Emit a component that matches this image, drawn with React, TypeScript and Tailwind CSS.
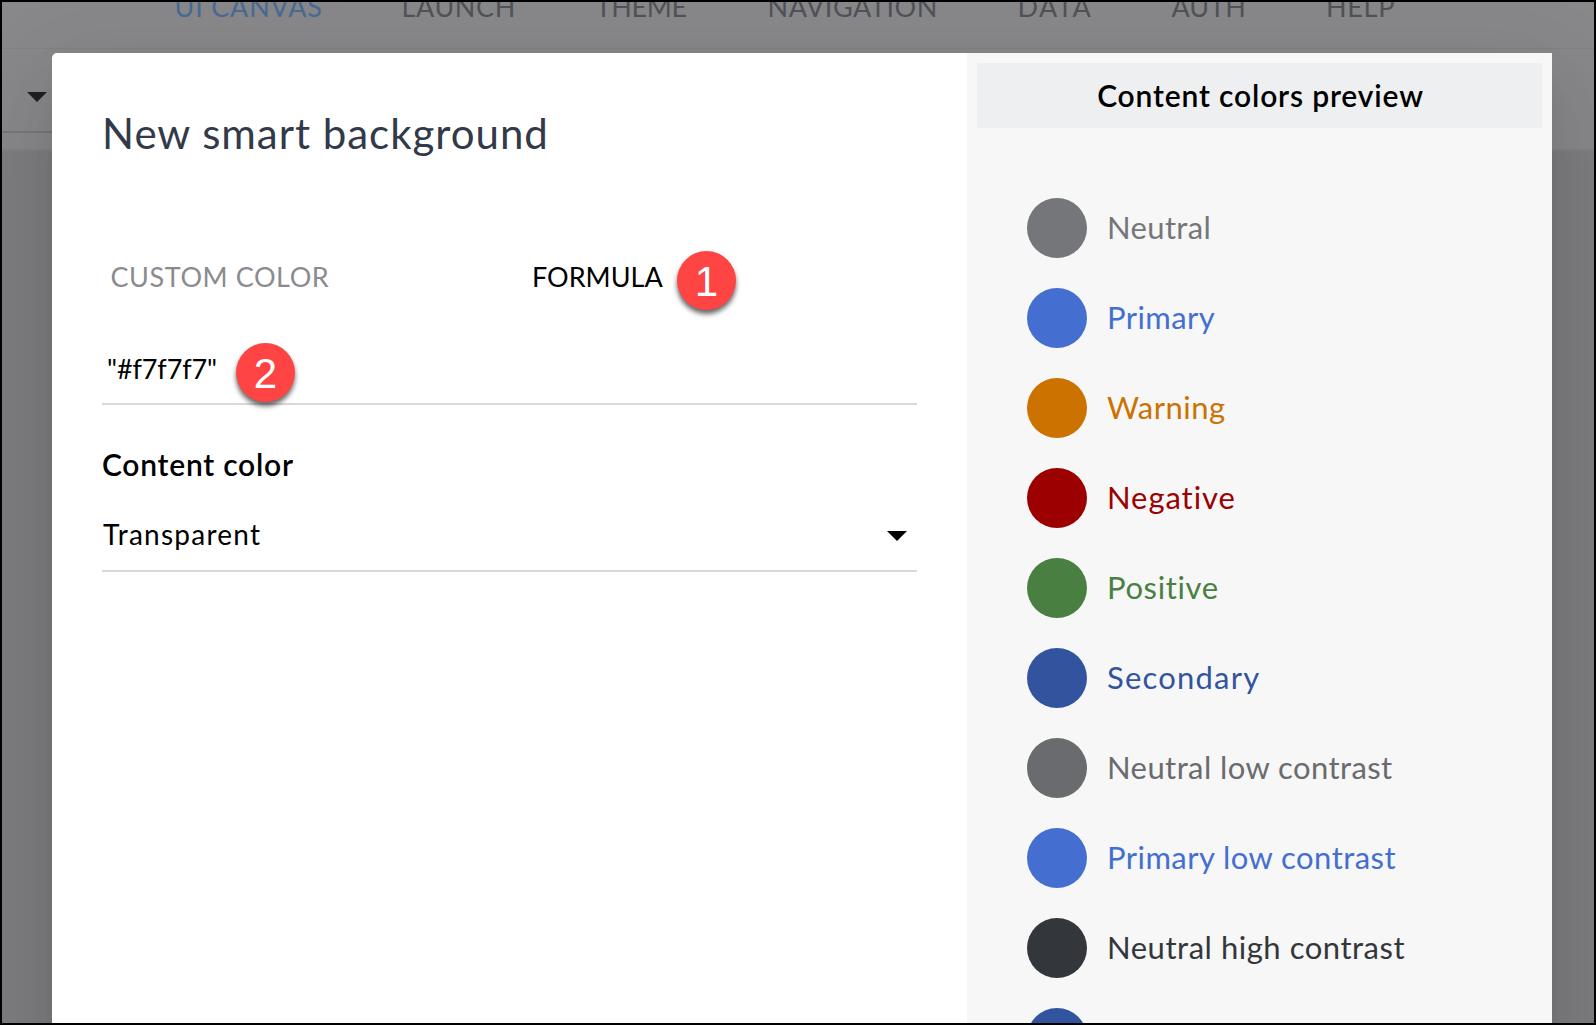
import React from 'react';

const navItems = [
  { label: 'UI CANVAS', box: 'w-[227px] tracking-[0.8px] text-[#496a92]' },
  { label: 'LAUNCH', box: 'w-[194px] tracking-[0.6px]' },
  { label: 'THEME', box: 'w-[172px] tracking-[-0.3px]' },
  { label: 'NAVIGATION', box: 'w-[250px] tracking-[0.55px]' },
  { label: 'DATA', box: 'w-[154px] tracking-[1.5px]' },
  { label: 'AUTH', box: 'w-[154.5px]' },
  { label: 'HELP', box: 'w-[100px] tracking-[0.7px]' },
];

const swatches = [
  { label: 'Neutral', dot: 'bg-[#757679]', text: 'text-[#757679] tracking-[0.35px]' },
  { label: 'Primary', dot: 'bg-[#446fd0]', text: 'text-[#446fd0] tracking-[0.4px]' },
  { label: 'Warning', dot: 'bg-[#cb7200]', text: 'text-[#cb7200] tracking-[0.5px]' },
  { label: 'Negative', dot: 'bg-[#9c0000]', text: 'text-[#9c0000] tracking-[0.93px]' },
  { label: 'Positive', dot: 'bg-[#498041]', text: 'text-[#498041] tracking-[0.62px]' },
  { label: 'Secondary', dot: 'bg-[#32549f]', text: 'text-[#32549f] tracking-[1.2px]' },
  { label: 'Neutral low contrast', dot: 'bg-[#6a6b6e]', text: 'text-[#6a6b6e] tracking-[0.42px]' },
  { label: 'Primary low contrast', dot: 'bg-[#446fd0]', text: 'text-[#446fd0] tracking-[0.45px]' },
  { label: 'Neutral high contrast', dot: 'bg-[#33363b]', text: 'text-[#33363b] tracking-[0.53px]' },
  { label: '', dot: 'bg-[#32549f]', text: '' },
];

function Caret({ className }: { className: string }) {
  return (
    <svg viewBox="0 0 20 10" className={className}>
      <path d="M0 0H20L10 10Z" fill="currentColor" />
    </svg>
  );
}

function Badge({ value }: { value: string }) {
  return (
    <span className="flex h-[59px] w-[59px] shrink-0 items-center justify-center rounded-full bg-[#ff4444] pt-[2px] font-['Liberation_Sans',sans-serif] text-[42px] leading-[57px] text-white shadow-[0_4px_5px_rgba(0,0,0,0.6)]">
      {value}
    </span>
  );
}

function Backdrop() {
  return (
    <div className="flex h-full flex-col bg-[#7d7d80]">
      <div className="h-12 overflow-hidden bg-[#88888a]">
        <nav className="-mt-[9px] flex pl-[174.5px] text-[27px] leading-[32px] text-[#515257]">
          {navItems.map((item) => (
            <span key={item.label} className={`shrink-0 whitespace-nowrap ${item.box}`}>
              {item.label}
            </span>
          ))}
        </nav>
      </div>
      <div className="flex h-[103px] flex-col border-t border-b-2 border-t-[#828284] border-b-[#828284] bg-[#88888a]">
        <div className="h-[84px] w-[200px] border-b-2 border-[#77777a] pt-[43px] pl-[27px]">
          <Caret className="h-[10px] w-5 text-[#202022]" />
        </div>
      </div>
    </div>
  );
}

function FormPanel() {
  return (
    <section className="w-[915px] rounded-tl-[5px] bg-white pt-[55px] pr-[50px] pl-[50px] text-black">
      <h1 className="text-[42px] leading-[50px] tracking-[0.98px] text-[#323a4a]">New smart background</h1>
      <div className="mt-[93px] flex h-[59px] pl-[8.5px]">
        <span className="w-[421.5px] pt-[10px] text-[27px] leading-[32px] tracking-[0.57px] text-[#8a8b90]">CUSTOM COLOR</span>
        <span className="w-[145px] pt-[10px] text-[27px] leading-[32px]">FORMULA</span>
        <Badge value="1" />
      </div>
      <div className="mt-[33px] flex h-[62px] border-b-2 border-[#d8d8dd] pl-[5px]">
        <span className="w-[129px] pt-[10px] text-[27px] leading-[32px] tracking-[-0.12px]">"#f7f7f7"</span>
        <Badge value="2" />
      </div>
      <h2 className="mt-[41px] text-[30px] leading-[36px] font-semibold tracking-[0.75px]">Content color</h2>
      <div className="mt-[34px] flex h-[56px] justify-between border-b-2 border-[#d8d8dd] pt-[1px] pr-[10px] pl-px">
        <span className="text-[28px] leading-[34px] tracking-[1.25px]">Transparent</span>
        <Caret className="mt-[14px] h-[10px] w-5" />
      </div>
    </section>
  );
}

function PreviewPanel() {
  return (
    <section className="w-[585px] bg-[#f7f7f7] p-[10px]">
      <h2 className="h-[65px] bg-[#eeeff1] pl-[2px] text-center text-[30px] leading-[65px] font-semibold tracking-[0.84px] text-black">
        Content colors preview
      </h2>
      <ul className="mt-[70px] flex flex-col gap-[30px] pl-[50px]">
        {swatches.map((s, i) => (
          <li key={i} className="flex h-[60px] items-center gap-5">
            <span className={`h-[60px] w-[60px] shrink-0 rounded-full ${s.dot}`} />
            {s.label && (
              <span className={`pb-[2px] text-[31px] leading-[38px] whitespace-nowrap ${s.text}`}>{s.label}</span>
            )}
          </li>
        ))}
      </ul>
    </section>
  );
}

export default function App() {
  return (
    <div className="relative h-[1025px] w-[1596px] overflow-hidden font-['Lato',sans-serif]">
      <Backdrop />
      <div
        role="dialog"
        className="absolute top-[53px] left-[52px] flex h-[1300px] w-[1500px] rounded-tl-[5px] shadow-[0_22px_30px_-14px_rgba(0,0,0,0.1),0_48px_76px_6px_rgba(0,0,0,0.07),0_18px_92px_16px_rgba(0,0,0,0.06)]"
      >
        <FormPanel />
        <PreviewPanel />
      </div>
      <div className="pointer-events-none absolute inset-0 border-2 border-black" />
    </div>
  );
}
